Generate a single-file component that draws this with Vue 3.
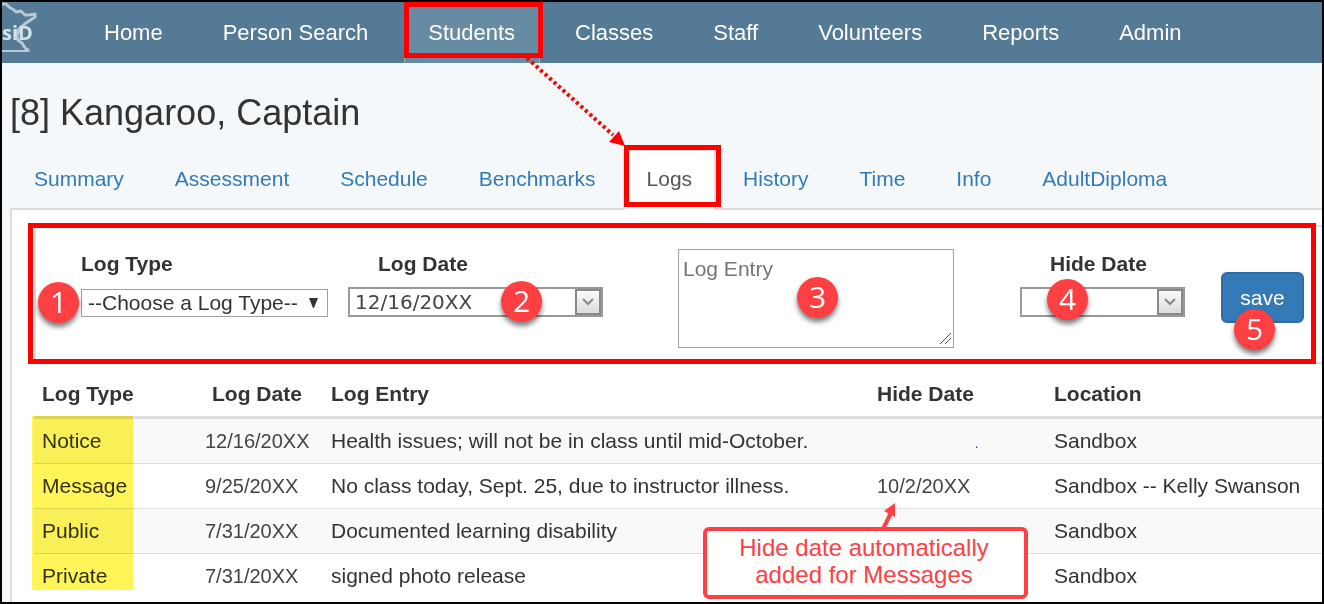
<!-- StudentLogs.vue -->
<template>
  <div class="page">
    <header class="navbar">
      <a class="brand" href="#" aria-label="SiD home">
        <svg width="36" height="56" viewBox="0 0 36 56" aria-hidden="true">
          <g fill="none" stroke="#b4c8d6" stroke-width="2" stroke-linejoin="round">
            <path d="M0 2l4 0 3 3 5 3 2 2 5-1 4 4 4 0 6-1 0 3-9 6-7 6-1 5" stroke-width="3" />
            <path d="M16 27l-1 8 1 3 4 3 3 5 3 2 0 2" stroke-width="3" />
            <path d="M0 49h27" />
          </g>
          <text x="0" y="38" class="brand-text">siD</text>
        </svg>
      </a>
      <nav class="nav">
        <a
          v-for="item in navItems"
          :key="item"
          href="#"
          :class="{ active: item === 'Students' }"
        >
          {{ item }}
          <span v-if="item === 'Students'" class="outline outline-nav"></span>
        </a>
      </nav>
    </header>

    <h1>[8] Kangaroo, Captain</h1>

    <nav class="tabs">
      <a v-for="tab in tabs" :key="tab" href="#" :class="{ active: tab === 'Logs' }">
        {{ tab }}
        <template v-if="tab === 'Logs'">
          <span class="outline outline-tab"></span>
          <svg class="nav-arrow" width="106" height="94" viewBox="0 0 106 94" aria-hidden="true">
            <path d="M8 4L94 81" stroke="#f00" stroke-width="4" stroke-dasharray="3 3" />
            <path d="M106 92L90 88 100 77z" fill="#f00" />
          </svg>
        </template>
      </a>
    </nav>

    <main class="panel">
      <form class="log-form" @submit.prevent>
        <div class="field">
          <label for="log-type">Log Type</label>
          <div class="select-wrap">
            <select id="log-type" v-model="logType">
              <option value="">--Choose a Log Type--</option>
              <option v-for="row in logs" :key="row.type" :value="row.type">{{ row.type }}</option>
            </select>
            <svg class="caret" width="9" height="10" viewBox="0 0 9 10" aria-hidden="true">
              <path d="M0 0h9L5 10h-1z" fill="#333" />
            </svg>
          </div>
          <span class="badge badge-1">1</span>
        </div>

        <div class="field">
          <label for="log-date" class="indent">Log Date</label>
          <div class="combo combo-wide">
            <input id="log-date" v-model="logDate" type="text">
            <button type="button" aria-label="Pick log date">
              <svg width="12" height="8" viewBox="0 0 12 8" aria-hidden="true">
                <path d="M1 1l5 5 5-5" fill="none" stroke="#888" stroke-width="2" />
              </svg>
            </button>
          </div>
          <span class="badge badge-2">2</span>
        </div>

        <div class="field">
          <div class="entry-wrap">
            <textarea v-model="logEntry" placeholder="Log Entry" aria-label="Log Entry"></textarea>
            <svg class="grip" width="13" height="13" viewBox="0 0 13 13" aria-hidden="true">
              <path d="M1 12L12 1M6 12L12 6" stroke="#555" />
            </svg>
          </div>
          <span class="badge badge-3">3</span>
        </div>

        <div class="field">
          <label for="hide-date" class="indent">Hide Date</label>
          <div class="combo combo-narrow">
            <input id="hide-date" v-model="hideDate" type="text">
            <button type="button" aria-label="Pick hide date">
              <svg width="12" height="8" viewBox="0 0 12 8" aria-hidden="true">
                <path d="M1 1l5 5 5-5" fill="none" stroke="#888" stroke-width="2" />
              </svg>
            </button>
          </div>
          <span class="badge badge-4">4</span>
        </div>

        <div class="field field-save">
          <button type="submit" class="save">save</button>
          <span class="badge badge-5">5</span>
        </div>
        <span class="outline outline-form"></span>
      </form>

      <div class="log-list">
        <table>
          <colgroup>
            <col class="col-type">
            <col class="col-date">
            <col class="col-entry">
            <col class="col-hide">
            <col>
          </colgroup>
          <thead>
            <tr>
              <th>Log Type</th>
              <th class="date-head">Log Date</th>
              <th>Log Entry</th>
              <th>Hide Date</th>
              <th>Location</th>
            </tr>
          </thead>
          <tbody>
            <tr v-for="row in logs" :key="row.type">
              <td>{{ row.type }}</td>
              <td class="date">{{ row.date }}</td>
              <td>{{ row.entry }}</td>
              <td class="date" :class="{ dot: row.hide === '.' }">{{ row.hide }}</td>
              <td>{{ row.location }}</td>
            </tr>
          </tbody>
        </table>
        <span class="highlight"></span>
        <div class="callout">
          Hide date automatically<br>added for Messages
          <svg width="20" height="26" viewBox="0 0 20 26" aria-hidden="true">
            <path d="M4 26L12 10" stroke="#ff4043" stroke-width="4" />
            <path d="M16 0L16 14 5 8z" fill="#ff4043" />
          </svg>
        </div>
      </div>
    </main>
  </div>
</template>

<script setup>
import { ref } from 'vue';

const navItems = ['Home', 'Person Search', 'Students', 'Classes', 'Staff', 'Volunteers', 'Reports', 'Admin'];
const tabs = ['Summary', 'Assessment', 'Schedule', 'Benchmarks', 'Logs', 'History', 'Time', 'Info', 'AdultDiploma'];

// Form fields
const logType = ref('');
const logDate = ref('12/16/20XX');
const logEntry = ref('');
const hideDate = ref('');

const logs = ref([
  { type: 'Notice', date: '12/16/20XX', entry: 'Health issues; will not be in class until mid-October.', hide: '.', location: 'Sandbox' },
  { type: 'Message', date: '9/25/20XX', entry: 'No class today, Sept. 25, due to instructor illness.', hide: '10/2/20XX', location: 'Sandbox -- Kelly Swanson' },
  { type: 'Public', date: '7/31/20XX', entry: 'Documented learning disability', hide: '', location: 'Sandbox' },
  { type: 'Private', date: '7/31/20XX', entry: 'signed photo release', hide: '', location: 'Sandbox' }
]);
</script>

<style>
body {
  margin: 0;
}
</style>

<style scoped>
* {
  box-sizing: border-box;
}

.page {
  display: flex;
  flex-direction: column;
  min-height: 100vh;
  border: 2px solid #000;
  background: #f4f8fa;
  color: #333;
  font-family: "Liberation Sans", Arial, sans-serif;
  font-size: 21px;
  line-height: 30px;
  overflow: hidden;
}

a {
  text-decoration: none;
}

/* Top bar */
.navbar {
  display: flex;
  background: #547a96;
}

.brand {
  width: 78px;
}

.brand svg {
  display: block;
}

.brand-text {
  fill: #d5e1e9;
  font-family: "Open Sans", sans-serif;
  font-size: 20px;
  font-weight: 700;
}

.nav {
  display: flex;
  gap: 11px;
}

.nav a {
  position: relative;
  padding: 16px 24px 15px 23px;
  border: solid transparent;
  border-width: 0 1px;
  color: #fff;
  font-size: 22px;
}

.nav a.active {
  background: #688ba4;
  border-color: #9ab2c3;
}

h1 {
  margin: 0;
  padding: 30px 8px 16px;
  font-size: 36px;
  font-weight: 400;
  line-height: 40px;
}

/* Student tabs */
.tabs {
  display: flex;
  gap: 3px;
  margin-left: 8px;
}

.tabs a {
  position: relative;
  padding: 13px 22px 14px;
  border: 2px solid transparent;
  border-bottom: 0;
  color: #337ab7;
}

.tabs a.active {
  margin-bottom: -2px;
  padding-bottom: 16px;
  border-color: #ddd;
  background: #fff;
  color: #555;
}

.panel {
  flex: 1;
  margin-left: 8px;
  padding: 15px 0 0 22px;
  border: solid #ddd;
  border-width: 2px 0 0 2px;
  background: #fff;
}

/* Entry form */
.log-form {
  position: relative;
  display: grid;
  grid-template-columns: 267fr 330fr 342fr 201fr 101fr;
  padding: 22px 0 14px 45px;
  border: solid #ddd;
  border-width: 2px 0 2px 2px;
}

.field {
  position: relative;
}

.field-save {
  padding-top: 23px;
}

label {
  display: block;
  margin-bottom: 8px;
  font-weight: 700;
}

.indent {
  padding-left: 30px;
}

.select-wrap {
  position: relative;
  width: 247px;
  padding-top: 2px;
}

select {
  display: block;
  appearance: none;
  width: 100%;
  height: 28px;
  padding: 0 20px 0 6px;
  border: 1px solid #a0a0a0;
  border-radius: 0;
  background: #fff;
  color: #333;
  font: inherit;
  line-height: 26px;
}

.caret {
  position: absolute;
  right: 10px;
  top: 11px;
}

.combo {
  display: flex;
  height: 30px;
  border: 2px solid #999;
  background: #fff;
}

.combo-wide {
  width: 255px;
}

.combo-narrow {
  width: 165px;
}

.combo input {
  flex: 1;
  min-width: 0;
  padding: 0 5px;
  border: 0;
  color: #444;
  font-family: "DejaVu Sans", Verdana, sans-serif;
  font-size: 20px;
}

.combo button {
  display: flex;
  align-items: center;
  justify-content: center;
  width: 26px;
  padding: 0;
  border: 2px solid #888;
  background: linear-gradient(#fafafa, #dcdcdc);
}

.entry-wrap {
  position: relative;
  width: 276px;
}

textarea {
  display: block;
  width: 100%;
  height: 99px;
  padding: 4px;
  border: 1px solid #a0a0a0;
  font: inherit;
  resize: none;
}

textarea::placeholder {
  color: #757575;
}

.grip {
  position: absolute;
  right: 2px;
  bottom: 3px;
  pointer-events: none;
}

.save {
  display: block;
  width: 83px;
  height: 51px;
  padding: 0;
  border: 2px solid #2e6da4;
  border-radius: 6px;
  background: #337ab7;
  color: #fff;
  font: inherit;
}

/* Log table */
.log-list {
  position: relative;
}

table {
  width: 100%;
  table-layout: fixed;
  border-spacing: 0;
}

.col-type {
  width: 163px;
}

.col-date {
  width: 126px;
}

.col-entry {
  width: 546px;
}

.col-hide {
  width: 177px;
}

th {
  padding: 15px 8px 7px;
  border-bottom: 3px solid #ddd;
  text-align: left;
}

th.date-head {
  padding-left: 15px;
}

td {
  padding: 7px 8px;
  border-bottom: 1px solid #ddd;
  white-space: nowrap;
}

tbody tr:nth-child(odd) {
  background: #f9f9f9;
}

tbody tr:last-child td {
  border-bottom: 0;
}

.date {
  color: #444;
  font-size: 20px;
}

.dot {
  padding: 10px 0 4px 106px;
  color: #228;
  font-size: 12px;
}

/* Step markers and notes */
.outline {
  position: absolute;
  border: 5px solid #f00;
  pointer-events: none;
}

.outline-nav {
  inset: 0 -4px 5px -1px;
}

.outline-tab {
  inset: -6px -7px 3px -1px;
}

.outline-form {
  inset: -4px 6px -2px -8px;
}

.nav-arrow {
  position: absolute;
  left: -106px;
  top: -97px;
}

.badge {
  position: absolute;
  width: 41px;
  height: 41px;
  border-radius: 50%;
  background: #ff4043;
  box-shadow: 0 4px 5px rgba(0, 0, 0, 0.5);
  color: #fff;
  font-family: "Open Sans", sans-serif;
  font-size: 30px;
  line-height: 39px;
  text-align: center;
  pointer-events: none;
}

.badge-1 {
  left: -43px;
  top: 33px;
}

.badge-2 {
  left: 153px;
  top: 32px;
}

.badge-3 {
  left: 119px;
  top: 28px;
}

.badge-4 {
  left: 27px;
  top: 30px;
}

.badge-5 {
  left: 13px;
  top: 60px;
}

.highlight {
  position: absolute;
  left: -2px;
  top: 52px;
  width: 101px;
  height: 174px;
  background: #fff559;
  mix-blend-mode: multiply;
  pointer-events: none;
}

.callout {
  position: absolute;
  left: 669px;
  top: 163px;
  width: 325px;
  height: 72px;
  padding: 3px 3px 0 0;
  border: 4px solid #ff4043;
  border-radius: 6px;
  background: #fff;
  color: #ff4043;
  font-size: 24px;
  line-height: 27px;
  text-align: center;
}

.callout svg {
  position: absolute;
  left: 172px;
  top: -28px;
}
</style>
